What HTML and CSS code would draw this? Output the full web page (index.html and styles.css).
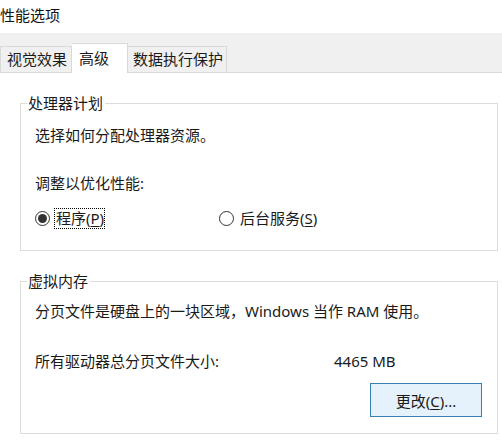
FILE: index.html
```html
<!DOCTYPE html>
<html lang="zh-CN">
<head>
<meta charset="utf-8">
<title>性能选项</title>
<link rel="stylesheet" href="styles.css">
</head>
<body>
<div class="dialog">
  <div class="titlebar"><span class="title">性能选项</span></div>
  <div class="tabstrip">
    <div class="tab tab-visual">视觉效果</div>
    <div class="tab active">高级</div>
    <div class="tab tab-dep">数据执行保护</div>
  </div>
  <div class="panel">
    <fieldset class="group group-cpu">
      <legend>处理器计划</legend>
      <div class="line desc">选择如何分配处理器资源。</div>
      <div class="line adjust">调整以优化性能:</div>
      <div class="radios">
        <div class="radio-opt">
          <span class="radio checked"><span class="dot"></span></span>
          <span class="label focus">程序(<u>P</u>)</span>
        </div>
        <div class="radio-opt">
          <span class="radio"></span>
          <span class="label">后台服务(<u>S</u>)</span>
        </div>
      </div>
    </fieldset>
    <fieldset class="group group-mem">
      <legend>虚拟内存</legend>
      <div class="line desc2">分页文件是硬盘上的一块区域，Windows 当作 RAM 使用。</div>
      <div class="line sizerow">
        <span class="sizelabel">所有驱动器总分页文件大小:</span>
        <span class="sizevalue">4465 MB</span>
      </div>
      <div class="btnrow">
        <button class="btn">更改(<u>C</u>)...</button>
      </div>
    </fieldset>
  </div>
</div>
</body>
</html>
```
FILE: styles.css
```css
html, body {
  margin: 0;
  padding: 0;
  background: #ffffff;
}
body {
  font-family: "Noto Sans", "Noto Sans CJK SC", sans-serif;
  font-size: 15px;
  color: #1a1a1a;
  width: 502px;
  height: 446px;
  overflow: hidden;
}
.dialog {
  display: flex;
  flex-direction: column;
}
.titlebar {
  height: 33px;
  background: #ffffff;
  display: flex;
  align-items: center;
}
.title {
  line-height: 20px;
  color: #111;
  margin-top: -3px;
}
.tabstrip {
  height: 39px;
  background: #f0f0f0;
  display: flex;
  align-items: flex-end;
  border-bottom: 1px solid #d9d9d9;
}
.tab {
  box-sizing: border-box;
  height: 26px;
  line-height: 25px;
  background: #f0f0f0;
  border: 1px solid #d9d9d9;
  border-bottom: none;
  color: #1a1a1a;
  white-space: nowrap;
}
.tab-visual {
  width: 72px;
  padding-left: 6px;
}
.tab.active {
  width: 56px;
  height: 30px;
  line-height: 28px;
  margin-bottom: -1px;
  padding-left: 7px;
  background: #ffffff;
  border-left: none;
  position: relative;
  z-index: 1;
}
.tab-dep {
  width: 99px;
  padding-left: 5px;
  border-left: none;
}
.panel {
  background: #ffffff;
  padding: 20px 4px 0 20px;
  display: flex;
  flex-direction: column;
  gap: 20px;
}
.group {
  margin: 0;
  border: 1px solid #dcdcdc;
  border-radius: 0;
  padding: 0 14px;
  min-width: 0;
}
.group legend {
  padding: 0 2px 0 1px;
  margin-left: -8px;
  line-height: 20px;
  color: #1a1a1a;
}
.line {
  line-height: 20px;
  height: 20px;
  white-space: nowrap;
}
.group-cpu {
  padding-bottom: 22px;
}
.group-cpu .desc {
  margin-top: 12px;
}
.group-cpu .adjust {
  margin-top: 28px;
}
.radios {
  margin-top: 15px;
  display: flex;
  height: 20px;
  align-items: center;
}
.radio-opt {
  display: flex;
  align-items: center;
  gap: 4px;
}
.radio-opt:first-child {
  width: 184px;
}
.radio {
  width: 13px;
  height: 13px;
  border: 1px solid #333;
  border-radius: 50%;
  background: #fff;
  display: flex;
  align-items: center;
  justify-content: center;
  flex: none;
}
.radio .dot {
  width: 9px;
  height: 9px;
  border-radius: 50%;
  background: #333;
}
.label {
  line-height: 19px;
  padding: 0 0 0 1px;
  border: 1px dotted transparent;
}
.label.focus {
  border: 1px dotted #000;
}
.group-mem {
  padding-bottom: 16px;
}
.group-mem .desc2 {
  margin-top: 10px;
}
.sizerow {
  margin-top: 30px;
  display: grid;
  grid-template-columns: 299px auto;
}
.btnrow {
  margin-top: 12px;
  display: flex;
  justify-content: flex-end;
  padding-right: 1px;
}
.btn {
  width: 112px;
  height: 34px;
  font-family: inherit;
  font-size: 15px;
  color: #1a1a1a;
  background: #e5f1fb;
  border: 1px solid #3c7fb1;
  border-radius: 0;
  padding: 0;
  margin: 0;
}
u {
  text-decoration: underline;
  text-underline-offset: 2px;
}
```
